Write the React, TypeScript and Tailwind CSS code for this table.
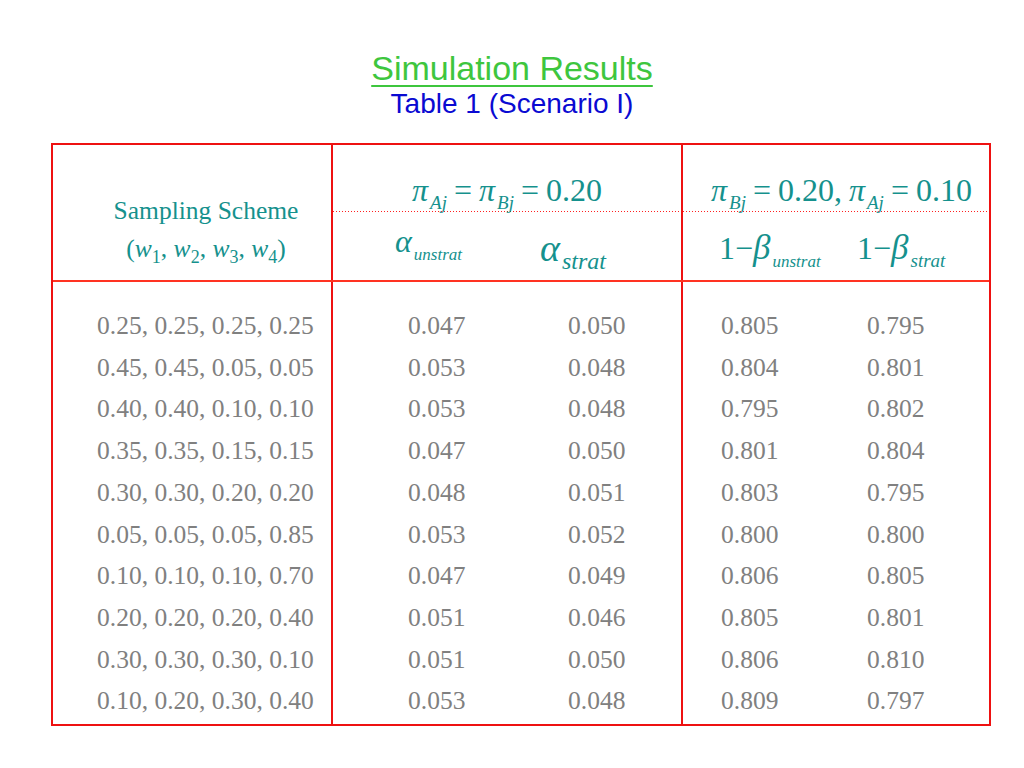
const rows = [
  ["0.25, 0.25, 0.25, 0.25", "0.047", "0.050", "0.805", "0.795"],
  ["0.45, 0.45, 0.05, 0.05", "0.053", "0.048", "0.804", "0.801"],
  ["0.40, 0.40, 0.10, 0.10", "0.053", "0.048", "0.795", "0.802"],
  ["0.35, 0.35, 0.15, 0.15", "0.047", "0.050", "0.801", "0.804"],
  ["0.30, 0.30, 0.20, 0.20", "0.048", "0.051", "0.803", "0.795"],
  ["0.05, 0.05, 0.05, 0.85", "0.053", "0.052", "0.800", "0.800"],
  ["0.10, 0.10, 0.10, 0.70", "0.047", "0.049", "0.806", "0.805"],
  ["0.20, 0.20, 0.20, 0.40", "0.051", "0.046", "0.805", "0.801"],
  ["0.30, 0.30, 0.30, 0.10", "0.051", "0.050", "0.806", "0.810"],
  ["0.10, 0.20, 0.30, 0.40", "0.053", "0.048", "0.809", "0.797"],
]

const serif = "font-['Liberation_Serif',serif]"

function Sub({ children, size = "text-[19px]" }: { children: React.ReactNode; size?: string }) {
  return <span className={`${size} italic relative top-[8px] ml-[2px]`}>{children}</span>
}

function Pi({ sub }: { sub: string }) {
  return (
    <span>
      <span className="italic">π</span>
      <Sub>{sub}</Sub>
    </span>
  )
}

// red dotted rule under the π headers
function Dots() {
  return <div className="h-[1px] bg-[linear-gradient(to_right,#ff2020_50%,transparent_50%)] bg-[length:3px_1px]" />
}

export default function App() {
  return (
    <div className="w-[1024px] h-[768px] bg-white overflow-hidden">
      {/* Title */}
      <div className="pt-[51px] text-center font-['Liberation_Sans',Arial,sans-serif] leading-none">
        <div className="text-[34px] text-[#3ec63e] underline decoration-2 underline-offset-[5px]">
          Simulation Results
        </div>
        <div className="mt-[5px] text-[28px] text-[#0a0ad2]">Table 1 (Scenario I)</div>
      </div>

      {/* Table */}
      <div className={`ml-[51px] mt-[25px] w-[940px] border-2 border-[#ee1111] ${serif}`}>
        {/* Header */}
        <div className="grid grid-cols-[280px_350px_1fr] h-[137px] border-b-2 border-[#ff3322] text-[#15918d]">
          <div className="border-r-2 border-[#ee1111] flex flex-col items-center pl-[28px] pt-[53px] text-[25.5px] leading-none">
            <div>Sampling Scheme</div>
            <div className="mt-[12px] whitespace-nowrap">
              (<span className="italic">w</span>
              <span className="text-[18px] relative top-[6px]">1</span>,{" "}
              <span className="italic">w</span>
              <span className="text-[18px] relative top-[6px]">2</span>,{" "}
              <span className="italic">w</span>
              <span className="text-[18px] relative top-[6px]">3</span>,{" "}
              <span className="italic">w</span>
              <span className="text-[18px] relative top-[6px]">4</span>)
            </div>
          </div>

          <div className="border-r-2 border-[#ee1111] flex flex-col">
            <div className="h-[66px] flex items-end justify-center pb-[5px] text-[32px] leading-none whitespace-nowrap">
              <Pi sub="Aj" />
              <span className="mx-[7px]">=</span>
              <Pi sub="Bj" />
              <span className="mx-[7px]">=</span>
              <span>0.20</span>
            </div>
            <Dots />
            <div className="flex-1 grid grid-cols-[145px_1fr] pl-[62px] pt-[13px] leading-none">
              <div className="text-[32px] whitespace-nowrap">
                <span className="italic">α</span>
                <Sub size="text-[17px]">unstrat</Sub>
              </div>
              <div className="text-[38px] whitespace-nowrap pt-[4px]">
                <span className="italic">α</span>
                <Sub size="text-[24px]">strat</Sub>
              </div>
            </div>
          </div>

          <div className="flex flex-col">
            <div className="h-[66px] flex items-end pl-[28px] pb-[5px] text-[32px] leading-none whitespace-nowrap">
              <Pi sub="Bj" />
              <span className="mx-[7px]">=</span>
              <span>0.20,</span>
              <span className="ml-[7px]">
                <Pi sub="Aj" />
              </span>
              <span className="mx-[7px]">=</span>
              <span>0.10</span>
            </div>
            <Dots />
            <div className="flex-1 flex pl-[36px] pt-[18px] text-[32px] leading-none whitespace-nowrap">
              <div className="w-[138px]">
                1−<span className="italic text-[35px]">β</span>
                <Sub size="text-[17px]">unstrat</Sub>
              </div>
              <div>
                1−<span className="italic text-[35px]">β</span>
                <Sub size="text-[19px]">strat</Sub>
              </div>
            </div>
          </div>
        </div>

        {/* Body */}
        <div className="grid grid-cols-[280px_350px_1fr] text-[25.5px] text-[#808080] leading-none">
          <div className="border-r-2 border-[#ee1111] pt-[23px] pb-[2px] pl-[44px]">
            {rows.map((r, i) => (
              <div key={i} className="h-[41.7px] flex items-center whitespace-nowrap">
                {r[0]}
              </div>
            ))}
          </div>
          <div className="border-r-2 border-[#ee1111] pt-[23px] pb-[2px] pl-[75px]">
            {rows.map((r, i) => (
              <div key={i} className="h-[41.7px] grid grid-cols-[160px_1fr] items-center">
                <span>{r[1]}</span>
                <span>{r[2]}</span>
              </div>
            ))}
          </div>
          <div className="pt-[23px] pb-[2px] pl-[38px]">
            {rows.map((r, i) => (
              <div key={i} className="h-[41.7px] grid grid-cols-[146px_1fr] items-center">
                <span>{r[3]}</span>
                <span>{r[4]}</span>
              </div>
            ))}
          </div>
        </div>
      </div>
    </div>
  )
}
